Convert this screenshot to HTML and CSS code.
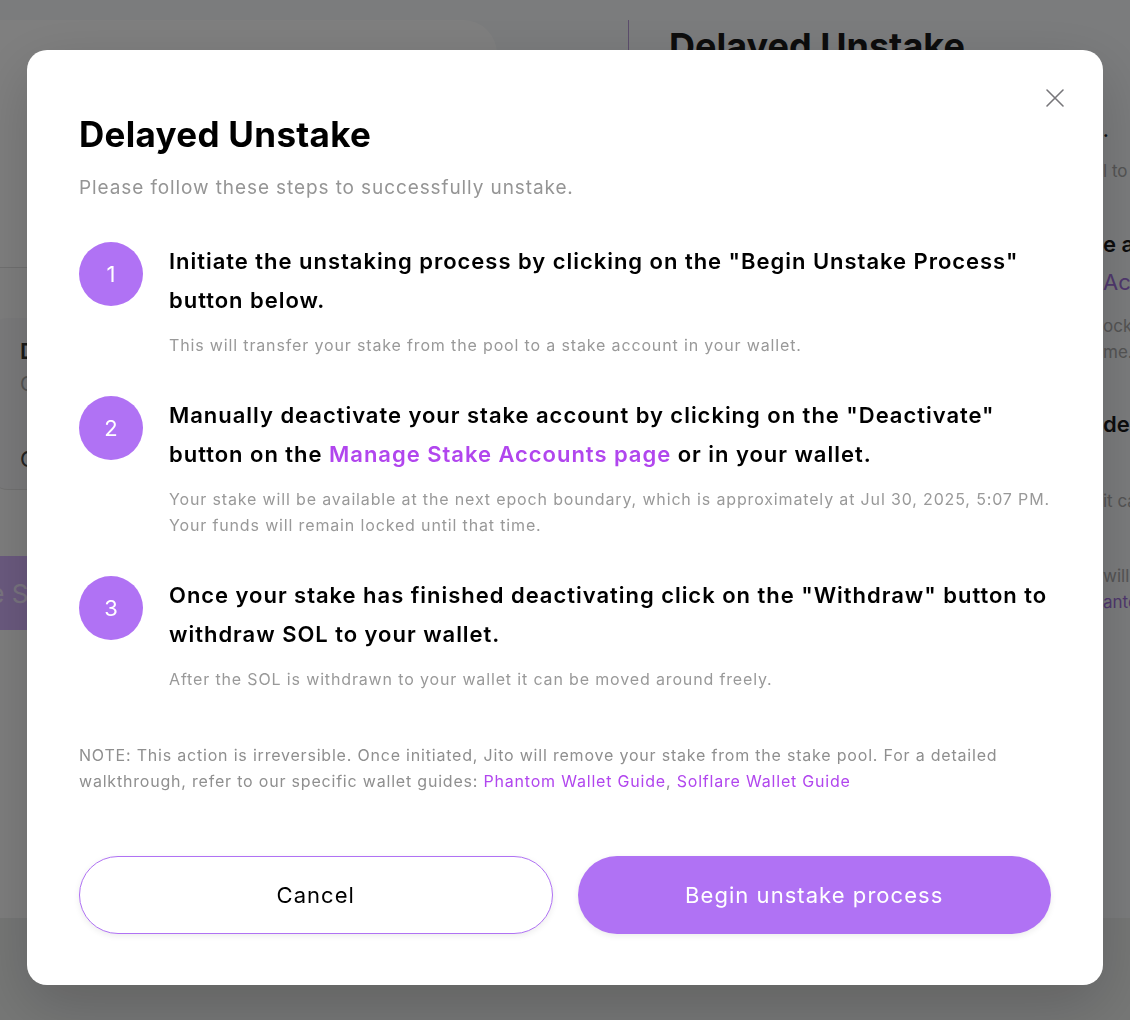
FILE: index.html
```html
<!DOCTYPE html>
<html lang="en">
<head>
<meta charset="utf-8">
<title>Delayed Unstake</title>
<link rel="stylesheet" href="styles.css">
</head>
<body>
<div class="page">
  <aside class="left-col">
    <div class="left-top"></div>
    <div class="left-body">
      <div class="acct-card">
        <div class="acct-title">Deactivating</div>
        <div class="acct-sub">Cooldown</div>
        <div class="acct-foot">Claimable</div>
      </div>
      <div class="left-btn">Unstake SOL</div>
    </div>
  </aside>
  <main class="right-col">
    <h2 class="bg-title">Delayed Unstake</h2>
    <p class="frag frag-dot">.</p>
    <p class="frag frag-muted f1">l to a stake account</p>
    <p class="frag frag-strong f2">e account by clicking</p>
    <p class="frag frag-link f3">Accounts page</p>
    <p class="frag frag-muted f4">ock boundary</p>
    <p class="frag frag-muted f5">me.</p>
    <p class="frag frag-strong f6">deactivating</p>
    <p class="frag frag-muted f7">it can be moved</p>
    <p class="frag frag-muted f8">will remove your stake</p>
    <p class="frag frag-link small">antom Wallet Guide</p>
  </main>
</div>
<footer class="page-foot"></footer>

<div class="overlay">
  <div class="modal" role="dialog" aria-labelledby="dlg-title">
    <button class="close" aria-label="Close">
      <svg width="20" height="20" viewBox="0 0 20 20"><path d="M2 2 L18 18 M18 2 L2 18" stroke="#77767a" stroke-width="1.6" stroke-linecap="round" fill="none"/></svg>
    </button>
    <h1 id="dlg-title" class="title">Delayed Unstake</h1>
    <p class="subtitle">Please follow these steps to successfully unstake.</p>

    <ol class="steps">
      <li class="step">
        <span class="num">1</span>
        <div class="step-body">
          <p class="step-title">Initiate the unstaking process by clicking on the "Begin Unstake Process" button below.</p>
          <p class="step-desc">This will transfer your stake from the pool to a stake account in your wallet.</p>
        </div>
      </li>
      <li class="step">
        <span class="num">2</span>
        <div class="step-body">
          <p class="step-title">Manually deactivate your stake account by clicking on the "Deactivate" button on the <a class="link" href="#">Manage Stake Accounts page</a> or in your wallet.</p>
          <p class="step-desc">Your stake will be available at the next epoch boundary, which is approximately at Jul 30, 2025, 5:07&nbsp;PM. Your funds will remain locked until that time.</p>
        </div>
      </li>
      <li class="step">
        <span class="num">3</span>
        <div class="step-body">
          <p class="step-title">Once your stake has finished deactivating click on the "Withdraw" button to withdraw SOL to your wallet.</p>
          <p class="step-desc">After the SOL is withdrawn to your wallet it can be moved around freely.</p>
        </div>
      </li>
    </ol>

    <p class="note">NOTE: This action is irreversible. Once initiated, Jito will remove your stake from the stake pool. For a detailed walkthrough, refer to our specific wallet guides: <a class="link" href="#">Phantom Wallet Guide</a>, <a class="link" href="#">Solflare Wallet Guide</a></p>

    <div class="actions">
      <button class="btn btn-outline">Cancel</button>
      <button class="btn btn-primary">Begin unstake process</button>
    </div>
  </div>
</div>
</body>
</html>
```

FILE: styles.css
```css
* { box-sizing: border-box; }

html, body {
  margin: 0;
  padding: 0;
}

body {
  width: 1130px;
  height: 1020px;
  overflow: hidden;
  background: #eceeed;
  font-family: Inter, "Noto Sans", "Liberation Sans", sans-serif;
  color: #000;
}

/* ---------- background page ---------- */
.page {
  display: flex;
  height: 918px;
  background: #f6f8fa;
  padding-top: 20px;
}

.left-col {
  width: 497px;
  display: flex;
  flex-direction: column;
}

.left-top {
  height: 248px;
  background: #fefffe;
  border-top-right-radius: 34px;
  border-bottom: 1px solid #e2e2e2;
}

.left-body {
  flex: 1;
  background: #fcfcfc;
  padding: 50px 0 0 0;
}

.acct-card {
  height: 172px;
  background: #f7f7f8;
  border-radius: 18px;
  padding: 18px 20px;
  border-bottom: 1px solid #e4e4e4;
  margin-left: -10px;
  margin-right: 120px;
}

.acct-title {
  font-size: 22px;
  line-height: 30px;
  font-weight: 600;
  color: #333;
  padding-left: 10px;
}

.acct-sub {
  font-size: 20px;
  line-height: 28px;
  color: #aaa;
  margin-top: 4px;
  padding-left: 10px;
}

.acct-foot {
  font-size: 22px;
  line-height: 30px;
  color: #444;
  margin-top: 46px;
  padding-left: 10px;
}

.left-btn {
  margin-top: 66px;
  margin-right: 120px;
  height: 74px;
  background: #d6b4ff;
  color: #f3eaff;
  font-size: 26px;
  display: flex;
  align-items: center;
  justify-content: flex-start;
  margin-left: -120px;
  padding-left: 24px;
}

.right-col {
  margin-left: 131px;
  flex: 1;
  border-left: 1px solid #b89ad8;
  padding-left: 40px;
  overflow: hidden;
}

.bg-title {
  margin: 4px 0 0 0;
  font-size: 36px;
  line-height: 44px;
  font-weight: 700;
  color: #1a1a1a;
  white-space: nowrap;
}

.frag {
  margin: 0;
  padding-left: 434px;
  white-space: nowrap;
  font-size: 17px;
  line-height: 26px;
}

.frag-dot { margin-top: 50px; color: #222; font-weight: 700; }
.frag-muted { color: #aaa; }
.frag-strong { font-size: 22px; line-height: 38px; font-weight: 600; color: #1a1a1a; }
.frag-link { font-size: 22px; line-height: 38px; color: #a070dc; }
.frag-link.small { font-size: 17px; line-height: 26px; }

.f1 { margin-top: 14px; }
.f2 { margin-top: 41px; }
.f3 { margin-top: 0; }
.f4 { margin-top: 12px; }
.f5 { margin-top: 0; }
.f6 { margin-top: 40px; }
.f7 { margin-top: 45px; }
.f8 { margin-top: 49px; }

/* ---------- overlay + modal ---------- */
.overlay {
  position: fixed;
  inset: 0;
  background: rgba(0, 0, 0, 0.5);
  display: flex;
  justify-content: center;
  align-items: flex-start;
  padding-top: 50px;
}

.modal {
  position: relative;
  width: 1076px;
  height: 935px;
  background: #fff;
  border-radius: 20px;
  padding: 63px 52px 51px 52px;
  box-shadow: 0 20px 60px rgba(0, 0, 0, 0.18);
  display: flex;
  flex-direction: column;
}

.close {
  position: absolute;
  top: 38px;
  right: 38px;
  width: 20px;
  height: 20px;
  padding: 0;
  border: 0;
  background: none;
  cursor: pointer;
  display: flex;
}

.title {
  margin: 0;
  font-size: 35px;
  line-height: 42px;
  font-weight: 700;
  letter-spacing: 0.3px;
}

.subtitle {
  margin: 20px 0 0 0;
  font-size: 19px;
  line-height: 26px;
  letter-spacing: 0.9px;
  color: #959595;
}

.steps {
  list-style: none;
  margin: 41px 0 0 0;
  padding: 0;
  display: flex;
  flex-direction: column;
  gap: 38px;
}

.step {
  display: grid;
  grid-template-columns: 64px 1fr;
  column-gap: 26px;
  align-items: start;
}

.num {
  width: 64px;
  height: 64px;
  border-radius: 50%;
  background: #b072f4;
  color: #fff;
  font-size: 22px;
  display: flex;
  align-items: center;
  justify-content: center;
}

.step-body {
  margin-right: -8px;
}

.step-title {
  margin: 0;
  font-size: 22px;
  line-height: 39px;
  font-weight: 600;
  letter-spacing: 0.97px;
}

.step-desc {
  margin: 12px 0 0 0;
  font-size: 16px;
  line-height: 26px;
  letter-spacing: 0.85px;
  color: #999;
}

.link {
  color: #b146ee;
  text-decoration: none;
}

.note {
  margin: 50px 0 0 0;
  font-size: 16px;
  line-height: 26px;
  letter-spacing: 0.8px;
  color: #8f8f8f;
}

.actions {
  margin-top: auto;
  display: grid;
  grid-template-columns: 1fr 1fr;
  gap: 25px;
}

.btn {
  height: 78px;
  border-radius: 39px;
  font-family: inherit;
  font-size: 22px;
  letter-spacing: 1.05px;
  cursor: pointer;
  box-shadow: 0 2px 6px rgba(0, 0, 0, 0.08);
}

.btn-outline {
  background: #fff;
  border: 1px solid #b072f4;
  color: #000;
}

.btn-primary {
  background: #b072f4;
  border: 0;
  color: #fff;
}
```
